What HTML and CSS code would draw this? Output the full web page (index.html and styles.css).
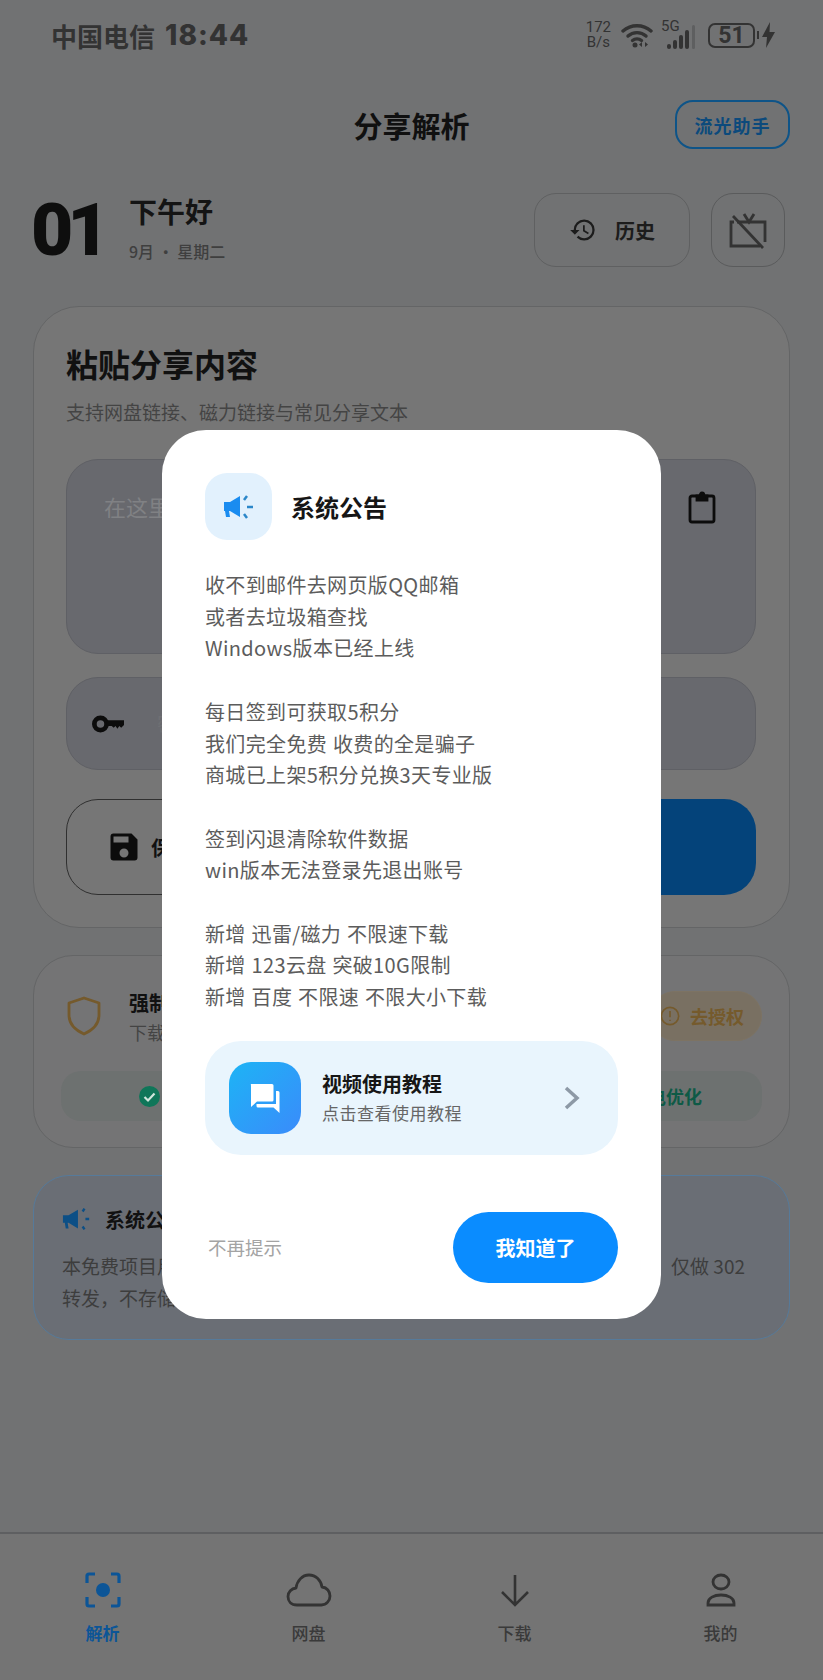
FILE: index.html
```html
<!DOCTYPE html>
<html lang="zh-CN">
<head>
    <meta charset="UTF-8">
    <meta name="viewport" content="width=device-width, initial-scale=1.0">
    <title>分享解析</title>
    <link rel="stylesheet" href="styles.css">
</head>
<body>
<div class="page">

    <!-- 状态栏 -->
    <div class="status">
        <div class="carrier">中国电信<span class="clock">18:44</span></div>
        <div class="status-right">
            <div class="speed">172<br>B/s</div>
            <svg class="wifi" width="32" height="26" viewBox="0 0 32 26" fill="none" stroke="#333" stroke-width="3.400" stroke-linecap="round">
                <path d="M2 9c8-7 20-7 28 0"/>
                <path d="M7 14c5-4.500 13-4.500 18 0"/>
                <path d="M11.500 18.500c2.500-2 6.500-2 9 0"/>
                <circle cx="14" cy="23" r="2.500" fill="#333" stroke="none"/>
                <path d="M21 20v5l-3-2.500zM24 20v5l3-2.500z" fill="#333" stroke="none"/>
            </svg>
            <div class="signal">
                <span class="five-g">5G</span>
                <svg width="30" height="26" viewBox="0 0 30 26" fill="#333">
                    <rect x="0" y="20" width="4" height="5" rx="2"/>
                    <rect x="6" y="16" width="4" height="9" rx="2"/>
                    <rect x="12" y="11" width="4" height="14" rx="2"/>
                    <rect x="18" y="6" width="4" height="19" rx="2"/>
                    <rect x="25" y="1" width="3" height="24" rx="1.500" fill="#5e5f60"/>
                </svg>
            </div>
            <div class="battery">51</div>
            <div class="battery-tip"></div>
            <svg width="13" height="26" viewBox="0 0 13 26" fill="#333"><path d="M8 0 0 15h5l-1 11 9-16H7.500z"/></svg>
        </div>
    </div>

    <!-- 标题栏 -->
    <div class="topbar">
        <div></div>
        <h1 class="page-title">分享解析</h1>
        <div class="helper-wrap"><div class="helper">流光助手</div></div>
    </div>

    <!-- 日期 -->
    <div class="greet">
        <div class="day">01</div>
        <div class="greet-text">
            <div class="hello">下午好</div>
            <div class="date">9月 · 星期二</div>
        </div>
        <div class="greet-btn history">
            <svg width="28" height="28" viewBox="0 0 24 24" fill="#1c1c1c"><path d="M13 3a9 9 0 0 0-9 9H1l3.890 3.890.07.14L9 12H6c0-3.870 3.130-7 7-7s7 3.130 7 7-3.130 7-7 7c-1.930 0-3.680-.79-4.940-2.060l-1.420 1.420A8.954 8.954 0 0 0 13 21a9 9 0 0 0 0-18zm-1 5v5l4.280 2.540.72-1.210-3.500-2.080V8H12z"/></svg>
            <span>历史</span>
        </div>
        <div class="greet-btn tv">
            <svg width="38" height="38" viewBox="0 0 38 38" fill="none" stroke="#333" stroke-width="2.800">
                <path d="M8 11h28v20M31 35H2V11h3"/>
                <path d="M15 3l5 8 5-8"/>
                <path d="M4 5l30 32"/>
            </svg>
        </div>
    </div>

    <!-- 粘贴卡片 -->
    <div class="card main-card">
        <h2 class="main-title">粘贴分享内容</h2>
        <p class="main-sub">支持网盘链接、磁力链接与常见分享文本</p>
        <div class="paste-box">
            <span class="placeholder">在这里</span>
            <svg width="28" height="34" viewBox="0 0 28 34" fill="none" stroke="#0c0c0c" stroke-width="2.800">
                <rect x="2" y="6" width="24" height="26" rx="2"/>
                <path d="M9 6h10v4H9zM12 6c0-4 4-4 4 0" fill="#0c0c0c"/>
            </svg>
        </div>
        <div class="key-row">
            <svg width="32" height="20" viewBox="0 0 34 20" fill="none">
                <circle cx="9" cy="10" r="6.500" stroke="#0c0c0c" stroke-width="5"/>
                <path d="M15 6h19v5l-3 3-2-2-2 3-2-3-2 2-2-2h-6z" fill="#0c0c0c"/>
            </svg>
            <span class="key-text">密码</span>
        </div>
        <div class="actions">
            <div class="save-btn">
                <svg width="36" height="36" viewBox="0 0 24 24" fill="#0c0c0c"><path d="M17 3H5a2 2 0 0 0-2 2v14a2 2 0 0 0 2 2h14a2 2 0 0 0 2-2V7l-4-4zm-5 16a3 3 0 1 1 0-6 3 3 0 0 1 0 6zm3-10H5V5h10v4z"/></svg>
                <span>保存</span>
            </div>
            <div class="go-btn"></div>
        </div>
    </div>

    <!-- 授权卡片 -->
    <div class="card auth-card">
        <div class="auth-row">
            <svg width="34" height="40" viewBox="0 0 34 40" fill="none" stroke="#755a2c" stroke-width="2.800" stroke-linejoin="round">
                <path d="M17 2l15 5v12c0 9-6 15-15 19C8 34 2 28 2 19V7z"/>
            </svg>
            <div class="auth-text">
                <div class="auth-name">强制</div>
                <div class="auth-desc">下载</div>
            </div>
            <div class="auth-pill">
                <svg width="20" height="20" viewBox="0 0 22 22" fill="none" stroke="#755a2c" stroke-width="1.800">
                    <circle cx="11" cy="11" r="9.500"/>
                    <path d="M11 5.500v7M11 15v1.500"/>
                </svg>
                <span>去授权</span>
            </div>
        </div>
        <div class="auth-strip">
            <svg width="21" height="21" viewBox="0 0 21 21"><circle cx="10.500" cy="10.500" r="10.500" fill="#0f7659"/><path d="M5.500 11l3.500 3.500 6.500-7" fill="none" stroke="#cfe5dc" stroke-width="2.200"/></svg>
            <span>电优化</span>
        </div>
    </div>

    <!-- 公告卡片 -->
    <div class="card notice-card">
        <div class="notice-head">
            <svg width="30" height="24" viewBox="0 0 32 24" fill="#0c4f86">
                <path d="M1 8h6l10-6v20L7 16h-1l1 6H4l-1-6H1z"/>
                <path d="M22 4l2-3M25 12h4M22 20l2 3" stroke="#0c4f86" stroke-width="2.500" fill="none"/>
            </svg>
            <span>系统公</span>
        </div>
        <div class="notice-line"><span>本免费项目用</span><span>仅做 302</span></div>
        <div class="notice-line"><span>转发，不存储</span></div>
    </div>

    <div class="spacer"></div>

    <!-- 底部导航 -->
    <div class="tabbar">
        <div class="tab active">
            <svg width="36" height="36" viewBox="0 0 36 36" fill="none" stroke="#0c5597" stroke-width="3.200">
                <path d="M2 11V4a2 2 0 0 1 2-2h6M26 2h6a2 2 0 0 1 2 2v7M34 25v7a2 2 0 0 1-2 2h-6M10 34H4a2 2 0 0 1-2-2v-7"/>
                <circle cx="18" cy="18" r="7" fill="#0c5597" stroke="none"/>
            </svg>
            <span>解析</span>
        </div>
        <div class="tab">
            <svg width="46" height="36" viewBox="0 0 46 36" fill="none" stroke="#333" stroke-width="2.800" stroke-linejoin="round">
                <path d="M11 33C5 33 2 29 2 24.500S5.500 16.500 10 16C11 9 16 3 23 3s12 5.500 13 12c5 .5 8 4.500 8 9s-3.500 9-8.500 9z"/>
            </svg>
            <span>网盘</span>
        </div>
        <div class="tab">
            <svg width="30" height="36" viewBox="0 0 30 36" fill="none" stroke="#333" stroke-width="2.600">
                <path d="M15 3v30M2 20l13 13 13-13"/>
            </svg>
            <span>下载</span>
        </div>
        <div class="tab">
            <svg width="32" height="36" viewBox="0 0 32 36" fill="none" stroke="#333" stroke-width="2.800">
                <ellipse cx="16" cy="10" rx="8" ry="7"/>
                <path d="M3 33v-2c0-5 6-8 13-8s13 3 13 8v2z"/>
            </svg>
            <span>我的</span>
        </div>
    </div>

    <!-- 系统公告弹窗 -->
    <div class="modal">
        <div class="modal-head">
            <div class="modal-icon">
                <svg width="32" height="26" viewBox="0 0 32 26" fill="#1a8cf0">
                    <path d="M1 8h6l10-6v21L7 17H6l1 6H3l-1-6H1z"/>
                    <path d="M21 6l3-4M24 13h6M21 20l3 4" stroke="#2b87c9" stroke-width="2.500" fill="none"/>
                </svg>
            </div>
            <div class="modal-title">系统公告</div>
        </div>
        <div class="modal-body">
            <p>收不到邮件去网页版QQ邮箱</p>
            <p>或者去垃圾箱查找</p>
            <p>Windows版本已经上线</p>
            <p>&nbsp;</p>
            <p>每日签到可获取5积分</p>
            <p>我们完全免费 收费的全是骗子</p>
            <p>商城已上架5积分兑换3天专业版</p>
            <p>&nbsp;</p>
            <p>签到闪退清除软件数据</p>
            <p>win版本无法登录先退出账号</p>
            <p>&nbsp;</p>
            <p>新增 迅雷/磁力 不限速下载</p>
            <p>新增 123云盘 突破10G限制</p>
            <p>新增 百度 不限速 不限大小下载</p>
        </div>
        <div class="guide">
            <div class="guide-icon">
                <svg width="34" height="34" viewBox="0 0 34 34" fill="#fff">
                    <path d="M3 3h21a1.500 1.500 0 0 1 1.500 1.500V19a1.500 1.500 0 0 1-1.500 1.500H9L3 26V4.500A1.500 1.500 0 0 1 3 3z"/>
                    <path d="M28 10h2a1.500 1.500 0 0 1 1.500 1.500V32l-6-5.500H10a1.500 1.500 0 0 1-1.500-1.500v-2H28z"/>
                </svg>
            </div>
            <div class="guide-text">
                <div class="guide-title">视频使用教程</div>
                <div class="guide-sub">点击查看使用教程</div>
            </div>
            <svg class="guide-arrow" width="16" height="24" viewBox="0 0 16 24" fill="none" stroke="#8d99a6" stroke-width="3.500"><path d="M2 2l11 10L2 22"/></svg>
        </div>
        <div class="modal-foot">
            <span class="no-more">不再提示</span>
            <div class="ok-btn">我知道了</div>
        </div>
    </div>

</div>
</body>
</html>
```

FILE: styles.css
```css
* {
    box-sizing: border-box;
}

html, body {
    margin: 0;
    padding: 0;
}

body {
    font-family: "Noto Sans CJK SC", "Noto Sans", sans-serif;
    color: #111;
}

h1, h2, p {
    margin: 0;
    font-weight: inherit;
}

.page {
    position: relative;
    width: 823px;
    height: 1680px;
    overflow: hidden;
    display: flex;
    flex-direction: column;
    background: #717273;
}

/* 状态栏 */
.status {
    height: 70px;
    display: flex;
    align-items: center;
    justify-content: space-between;
    padding: 0 48px 0 51px;
}

.carrier {
    display: flex;
    align-items: center;
    font-size: 26px;
    font-weight: 700;
    color: #333;
    white-space: nowrap;
}

.clock {
    margin-left: 10px;
    font-family: "Inter", sans-serif;
    font-size: 28px;
    font-weight: 800;
    letter-spacing: 1px;
}

.status-right {
    display: flex;
    align-items: center;
}

.speed {
    font-family: "Roboto", sans-serif;
    font-size: 15px;
    line-height: 15px;
    color: #333;
    text-align: center;
    margin-right: 10px;
}

.signal {
    position: relative;
    margin-left: 8px;
    width: 36px;
    height: 30px;
    display: flex;
    align-items: flex-end;
    justify-content: flex-end;
}

.five-g {
    position: absolute;
    left: 0;
    top: -3px;
    font-family: "Roboto", sans-serif;
    font-size: 15px;
    color: #333;
}

.battery {
    width: 47px;
    height: 25px;
    margin-left: 11px;
    border: 2px solid #333;
    border-radius: 7px;
    font-family: "Roboto", sans-serif;
    font-size: 23px;
    font-weight: 700;
    line-height: 21px;
    text-align: center;
    color: #333;
}

.battery-tip {
    width: 2px;
    height: 8px;
    margin: 0 3px 0 2px;
    background: #333;
}

/* 标题栏 */
.topbar {
    margin-top: 30px;
    height: 49px;
    padding-right: 33px;
    display: grid;
    grid-template-columns: 1fr auto 1fr;
    align-items: center;
}

.page-title {
    font-size: 29px;
    font-weight: 700;
    margin-left: 33px;
    color: #101010;
}

.helper-wrap {
    display: flex;
    justify-content: flex-end;
}

.helper {
    width: 115px;
    height: 49px;
    border: 2px solid #0e5488;
    border-radius: 18px;
    display: flex;
    align-items: center;
    justify-content: center;
    font-size: 18px;
    font-weight: 700;
    letter-spacing: 1px;
    color: #0c4a7c;
}

/* 日期 */
.greet {
    margin-top: 44px;
    height: 74px;
    padding: 0 38px 0 31px;
    display: flex;
    align-items: center;
}

.day {
    font-family: "Roboto", sans-serif;
    font-size: 73px;
    font-weight: 900;
    line-height: 74px;
    letter-spacing: -6px;
    color: #0e0e0e;
    width: 98px;
}

.greet-text {
    flex: 1;
}

.hello {
    font-size: 28px;
    font-weight: 700;
    line-height: 34px;
    margin-top: -4px;
    color: #141414;
}

.date {
    margin-top: 12px;
    font-size: 16px;
    line-height: 22px;
    color: #3f3f3f;
    font-weight: 500;
}

.greet-btn {
    height: 74px;
    border: 1px solid #5f6061;
    border-radius: 22px;
    display: flex;
    align-items: center;
    justify-content: center;
}

.history {
    width: 156px;
    gap: 18px;
    font-size: 20px;
    font-weight: 700;
    color: #1c1c1c;
}

.tv {
    width: 74px;
    margin-left: 21px;
    border-color: #5a5b5c;
}

/* 卡片 */
.card {
    margin: 0 33px;
    border: 1px solid #646566;
    background: #747475;
}

.main-card {
    margin-top: 39px;
    height: 622px;
    border-radius: 46px;
    padding: 37px 33px 0 32px;
    background: #767676;
}

.main-title {
    font-size: 32px;
    font-weight: 700;
    line-height: 38px;
    color: #111;
}

.main-sub {
    margin-top: 16px;
    font-size: 19px;
    line-height: 28px;
    color: #444;
}

.paste-box {
    margin-top: 33px;
    height: 195px;
    background: #68696e;
    border: 1px solid #5f6065;
    border-radius: 32px;
    padding: 30px 39px 0 37px;
    display: flex;
    justify-content: space-between;
    align-items: flex-start;
}

.placeholder {
    font-size: 22px;
    line-height: 32px;
    color: #808184;
}

.key-row {
    margin-top: 23px;
    height: 93px;
    background: #68696e;
    border: 1px solid #5f6065;
    border-radius: 32px;
    padding: 0 0 0 25px;
    display: flex;
    align-items: center;
    gap: 33px;
}

.key-text {
    font-size: 20px;
    color: #6f7074;
}

.actions {
    margin-top: 29px;
    height: 96px;
    display: flex;
    gap: 14px;
}

.save-btn {
    width: 330px;
    border: 1.500px solid #303030;
    border-radius: 32px;
    padding-left: 39px;
    display: flex;
    align-items: center;
    gap: 9px;
    font-size: 20px;
    font-weight: 700;
    color: #111;
}

.go-btn {
    flex: 1;
    background: #04437a;
    border-radius: 32px;
}

.auth-card {
    margin-top: 27px;
    height: 193px;
    border-radius: 40px;
    padding: 35px 27px 0;
}

.auth-row {
    height: 50px;
    padding-left: 6px;
    display: flex;
    align-items: center;
}

.auth-text {
    flex: 1;
    margin-left: 28px;
}

.auth-name {
    font-size: 20px;
    font-weight: 700;
    line-height: 28px;
    color: #111;
}

.auth-desc {
    margin-top: 3px;
    font-size: 18px;
    line-height: 24px;
    color: #444;
}

.auth-pill {
    width: 112px;
    height: 50px;
    background: #797062;
    border: 1px solid #7d7363;
    border-radius: 25px;
    padding-left: 9px;
    display: flex;
    align-items: center;
    gap: 10px;
    font-size: 18px;
    font-weight: 700;
    color: #755a2c;
}

.auth-strip {
    margin-top: 30px;
    height: 50px;
    background: #6d7170;
    border-radius: 20px;
    padding: 0 60px 0 78px;
    display: flex;
    align-items: center;
    justify-content: space-between;
    font-size: 18px;
    font-weight: 700;
    color: #0e5a46;
}

.notice-card {
    margin-top: 27px;
    height: 165px;
    border-radius: 36px;
    border-color: #567a9a;
    background: #6a6e75;
    padding: 29px 44px 0 28px;
}

.notice-head {
    display: flex;
    align-items: center;
    gap: 13px;
    height: 28px;
    font-size: 20px;
    font-weight: 700;
    color: #111;
}

.notice-line {
    display: flex;
    justify-content: space-between;
    height: 32px;
    font-size: 19px;
    line-height: 32px;
    color: #3d3d3d;
}

.notice-head + .notice-line {
    margin-top: 17px;
}

.spacer {
    flex: 1;
}

/* 底部导航 */
.tabbar {
    height: 148px;
    border-top: 2px solid #5e5f61;
    background: #747474;
    display: grid;
    grid-template-columns: repeat(4, 206px);
    justify-content: center;
    padding-top: 38px;
}

.tab {
    display: flex;
    flex-direction: column;
    align-items: center;
    font-size: 17px;
    font-weight: 500;
    color: #3a3a3a;
}

.tab svg {
    height: 36px;
}

.tab span {
    margin-top: 12px;
    line-height: 26px;
}

.tab.active {
    color: #0c5597;
    font-weight: 700;
}

/* 弹窗 */
.modal {
    position: absolute;
    left: 162px;
    top: 430px;
    width: 499px;
    height: 889px;
    background: #fff;
    border-radius: 44px;
    padding: 43px 43px 0;
    display: flex;
    flex-direction: column;
}

.modal-head {
    display: flex;
    align-items: center;
    gap: 19px;
}

.modal-icon {
    width: 67px;
    height: 67px;
    border-radius: 22px;
    background: #e2f1fd;
    display: flex;
    align-items: center;
    justify-content: center;
}

.modal-title {
    font-size: 24px;
    font-weight: 700;
    color: #161616;
}

.modal-body {
    margin-top: 29px;
    font-size: 20px;
    line-height: 31.700px;
    letter-spacing: 0.350px;
    word-spacing: 1px;
    color: #5c5c5c;
}

.guide {
    margin-top: 28px;
    height: 114px;
    border-radius: 36px;
    background: #e9f5fd;
    padding: 0 38px 0 24px;
    display: flex;
    align-items: center;
}

.guide-icon {
    width: 72px;
    height: 72px;
    border-radius: 22px;
    background: linear-gradient(135deg, #1db4f5, #3a8bfb);
    display: flex;
    align-items: center;
    justify-content: center;
}

.guide-text {
    flex: 1;
    margin-left: 21px;
}

.guide-title {
    font-size: 20px;
    font-weight: 700;
    line-height: 28px;
    color: #161616;
}

.guide-sub {
    margin-top: 3px;
    font-size: 17px;
    line-height: 24px;
    letter-spacing: 0.500px;
    color: #666;
}

.modal-foot {
    margin-top: 57px;
    display: flex;
    align-items: center;
    justify-content: space-between;
}

.no-more {
    margin-left: 3px;
    font-size: 18.500px;
    color: #a3a3a3;
}

.ok-btn {
    width: 165px;
    height: 71px;
    border-radius: 36px;
    background: #0a8cff;
    display: flex;
    align-items: center;
    justify-content: center;
    font-size: 20px;
    font-weight: 700;
    color: #fff;
}
```
